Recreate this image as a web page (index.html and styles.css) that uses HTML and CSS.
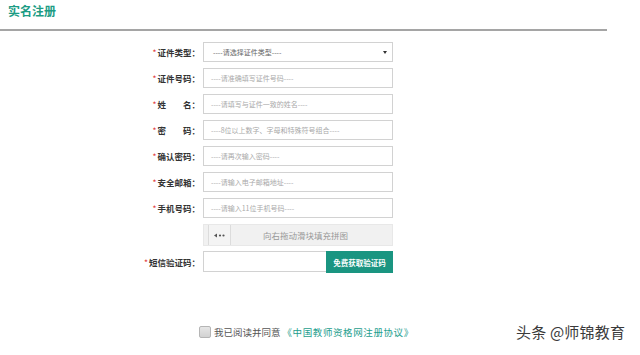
FILE: index.html
```html
<!DOCTYPE html>
<html lang="zh">
<head>
<meta charset="utf-8">
<title>实名注册</title>
<link rel="stylesheet" href="styles.css">
</head>
<body>
<header class="head">
  <h1 class="title">实名注册</h1>
</header>
<main class="form">
  <div class="row">
    <label class="lbl"><span class="req">*</span>证件类型：</label>
    <div class="field select"><span class="ph ph-sel">----请选择证件类型----</span><span class="arrow"></span></div>
  </div>
  <div class="row">
    <label class="lbl"><span class="req">*</span>证件号码：</label>
    <div class="field"><span class="ph">----请准确填写证件号码----</span></div>
  </div>
  <div class="row">
    <label class="lbl"><span class="req">*</span><span class="spread"><span>姓</span><span>名</span></span>：</label>
    <div class="field"><span class="ph">----请填写与证件一致的姓名----</span></div>
  </div>
  <div class="row">
    <label class="lbl"><span class="req">*</span><span class="spread"><span>密</span><span>码</span></span>：</label>
    <div class="field"><span class="ph">----8位以上数字、字母和特殊符号组合----</span></div>
  </div>
  <div class="row">
    <label class="lbl"><span class="req">*</span>确认密码：</label>
    <div class="field"><span class="ph">----请再次输入密码----</span></div>
  </div>
  <div class="row">
    <label class="lbl"><span class="req">*</span>安全邮箱：</label>
    <div class="field"><span class="ph">----请输入电子邮箱地址----</span></div>
  </div>
  <div class="row">
    <label class="lbl"><span class="req">*</span>手机号码：</label>
    <div class="field"><span class="ph">----请输入11位手机号码----</span></div>
  </div>
  <div class="row slider-row">
    <span class="lbl"></span>
    <div class="slider">
      <span class="handle">
        <svg width="12" height="5" viewBox="0 0 12 5"><path d="M0 2.5L3 0.5V4.5Z" fill="#555"/><circle cx="6" cy="2.5" r="1.1" fill="#555"/><circle cx="9.5" cy="2.5" r="1.1" fill="#555"/></svg>
      </span>
      <span class="slide-text">向右拖动滑块填充拼图</span>
    </div>
  </div>
  <div class="row sms-row">
    <label class="lbl"><span class="req">*</span>短信验证码：</label>
    <div class="sms">
      <div class="sms-input"></div>
      <button class="sms-btn">免费获取验证码</button>
    </div>
  </div>
</main>
<footer class="agree">
  <span class="check"></span>
  <span class="agree-text">我已阅读并同意</span>
  <a class="agree-link">《中国教师资格网注册协议》</a>
</footer>
<div class="watermark">头条 @师锦教育</div>
</body>
</html>
```

FILE: styles.css
```css
* { box-sizing: border-box; }
html, body { margin: 0; padding: 0; background: #fff; }
body {
  width: 640px;
  height: 355px;
  overflow: hidden;
  position: relative;
  font-family: "Noto Sans CJK SC", "Noto Sans", sans-serif;
}
.head {
  width: 607px;
  height: 31px;
  border-bottom: 2px solid #a5a5a5;
  padding: 3px 0 0 8px;
}
.title {
  margin: 0;
  font-size: 12px;
  line-height: 16px;
  font-weight: 700;
  color: #1c9c84;
}
.form {
  display: flex;
  flex-direction: column;
  gap: 6px;
  padding-top: 11px;
}
.row {
  display: flex;
  align-items: center;
  height: 20px;
}
.lbl {
  width: 203px;
  flex: none;
  padding-right: 3px;
  font-size: 8.5px;
  font-weight: 700;
  color: #333;
  display: flex;
  justify-content: flex-end;
  align-items: center;
}
.req {
  color: #e03a3a;
  font-weight: 400;
  font-size: 8.5px;
  margin-right: 1px;
}
.spread { display: inline-flex; width: 34px; justify-content: space-between; }
.field {
  width: 190px;
  height: 20px;
  border: 1px solid #d2d2d2;
  background: #fff;
  display: flex;
  align-items: center;
  padding-left: 7px;
  position: relative;
}
.ph {
  font-size: 7px;
  color: #a9a9a9;
  white-space: nowrap;
}
.ph-sel { color: #666; padding-left: 2px; }
.arrow {
  position: absolute;
  right: 5px;
  top: 8px;
  border-left: 2px solid transparent;
  border-right: 2px solid transparent;
  border-top: 3px solid #333;
}
.slider-row { height: 22px; }
.slider {
  width: 190px;
  height: 22px;
  background: #f1f1f1;
  border: 1px solid #e8e8e8;
  display: flex;
  align-items: center;
}
.handle {
  width: 23px;
  height: 20px;
  margin-left: 4px;
  background: #f4f4f4;
  border-left: 1px solid #dcdcdc;
  border-right: 1px solid #dcdcdc;
  display: flex;
  align-items: center;
  justify-content: center;
}
.slide-text {
  flex: 1;
  text-align: center;
  font-size: 8.5px;
  color: #999;
  padding-right: 12px;
}
.sms-row { height: 22px; margin-top: -1px; }
.sms { display: flex; width: 190px; height: 22px; align-items: flex-start; }
.sms-input {
  flex: 1;
  height: 21px;
  border: 1px solid #d2d2d2;
  border-right: none;
  background: #fff;
}
.sms-btn {
  width: 67px;
  height: 22px;
  border: none;
  background: #1a9581;
  color: #fff;
  font-family: inherit;
  font-size: 7.5px;
  font-weight: 700;
  padding: 0;
  cursor: pointer;
}
.agree {
  position: absolute;
  left: 199px;
  top: 325px;
  display: flex;
  align-items: center;
  gap: 3px;
  font-size: 9.5px;
  line-height: 14px;
}
.check {
  width: 12px;
  height: 12px;
  border: 1px solid #b5b5b5;
  border-radius: 2px;
  background: linear-gradient(#e6e6e6, #d2d2d2);
}
.agree-text { color: #555; }
.agree-link { color: #1d9e8e; margin-left: -1px; letter-spacing: 0.6px; }
.watermark {
  position: absolute;
  left: 516px;
  top: 322px;
  font-size: 15px;
  line-height: 20px;
  color: #3a3a3a;
  text-shadow: 0 0 2px #fff;
  letter-spacing: 0.2px;
}
```
